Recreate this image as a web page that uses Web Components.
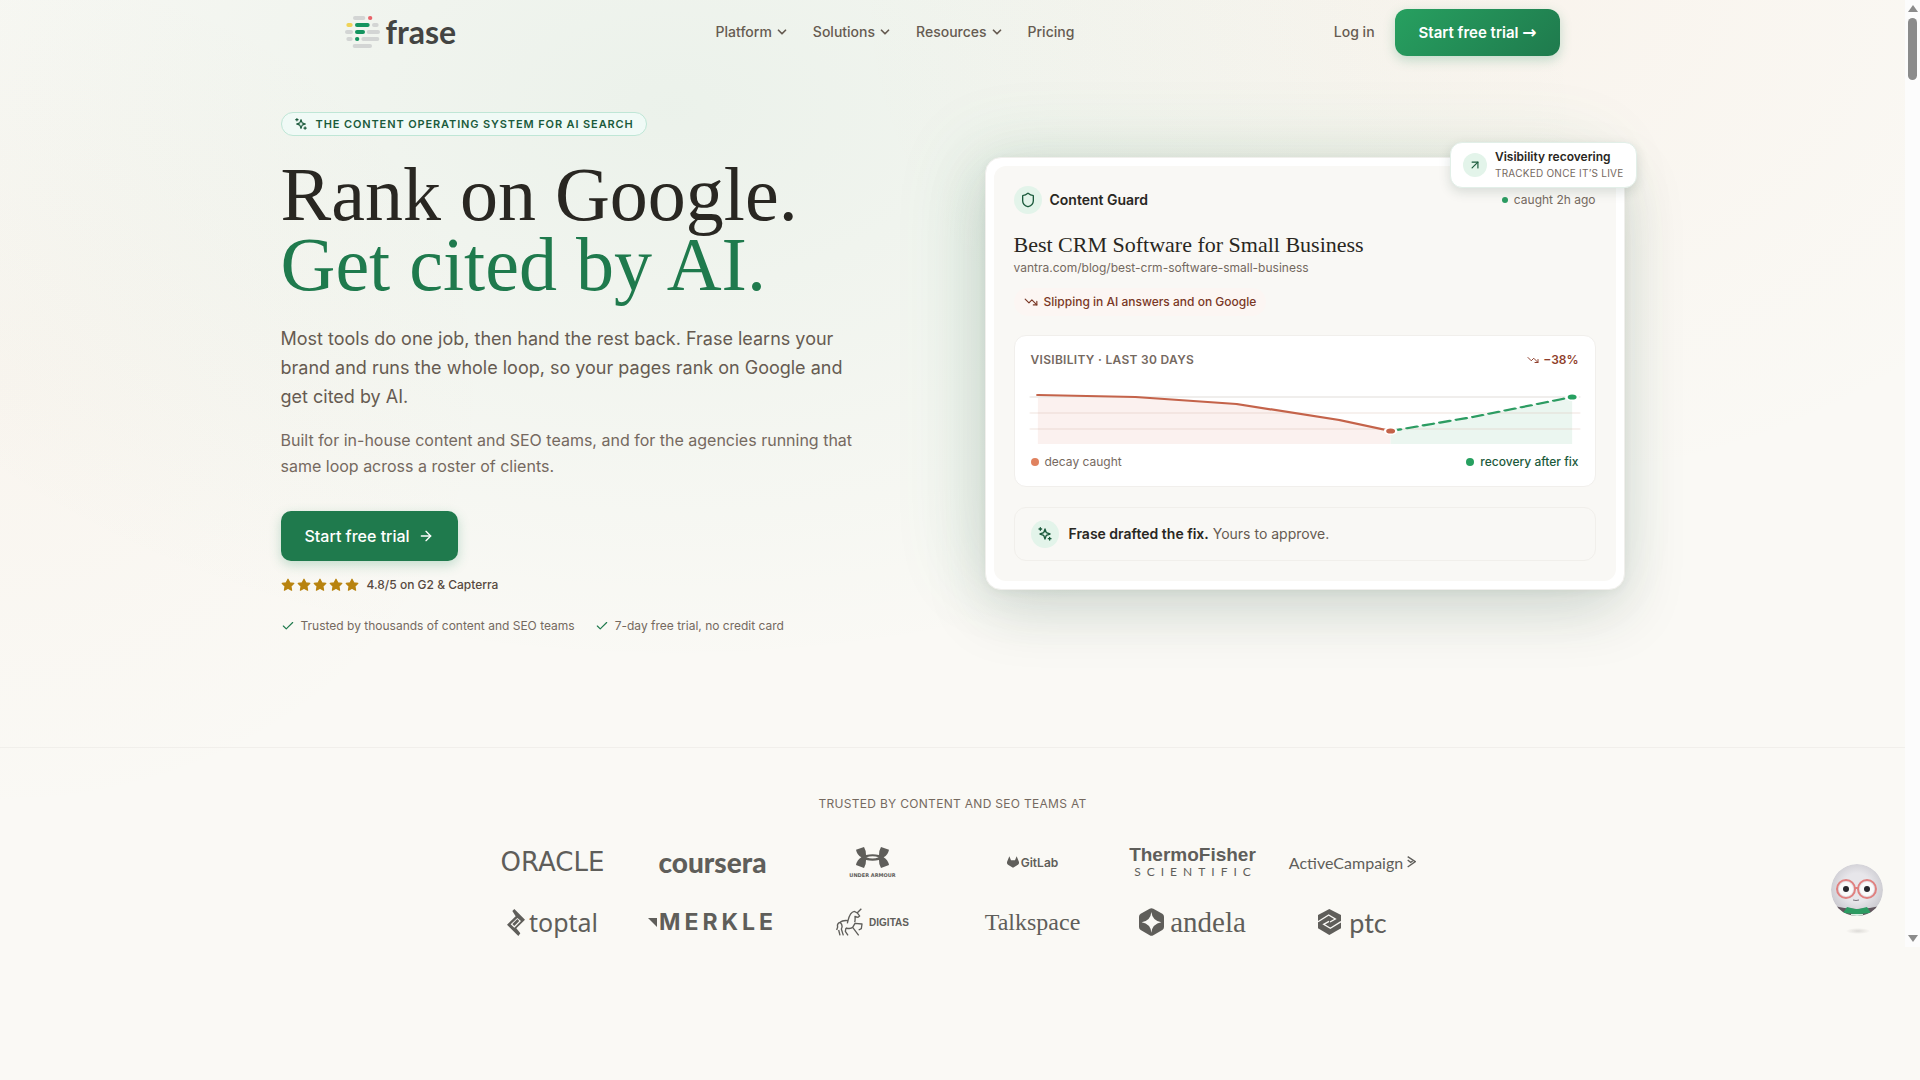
<!DOCTYPE html>
<html lang="en">
<head>
<meta charset="utf-8">
<meta name="viewport" content="width=device-width, initial-scale=1">
<title>Frase</title>
<style>
  :root {
    --sans: Inter, "Liberation Sans", sans-serif;
    --serif: "Liberation Serif", serif;
    --ink: #292722;
    --body: #665b51;
    --muted: #75695f;
    --green: #1f7a4d;
    --green-dark: #1b5a3c;
    --green-soft: #e3f4ea;
    --paper: #faf9f5;
  }
  body {
    margin: 0;
    padding-right: 15px;
    min-height: 100vh;
    box-sizing: border-box;
    font-family: var(--sans);
    color: var(--ink);
    background:
      radial-gradient(ellipse 48% 52% at 35% 10%, rgb(31 140 90 / 0.065), transparent),
      radial-gradient(ellipse 34% 46% at 78% 0%, rgb(230 150 90 / 0.05), transparent),
      radial-gradient(ellipse 26% 40% at 0% 36%, rgb(230 150 90 / 0.04), transparent),
      var(--paper);
  }
</style>
</head>
<body>
  <frase-header></frase-header>
  <main>
    <frase-hero>
      <frase-pill slot="eyebrow">The content operating system for AI search</frase-pill>
      <span slot="title">Rank on Google.</span>
      <span slot="accent">Get cited by AI.</span>
      <span slot="lead">Most tools do one job, then hand the rest back. Frase learns your brand and runs the whole loop, so your pages rank on Google and get cited by AI.</span>
      <span slot="note">Built for in-house content and SEO teams, and for the agencies running that same loop across a roster of clients.</span>
      <guard-card slot="visual"></guard-card>
    </frase-hero>
    <logo-wall><span slot="label">Trusted by content and SEO teams at</span></logo-wall>
  </main>
  <frase-mascot></frase-mascot>
  <page-scrollbar></page-scrollbar>

<script>
const define = (name, html) => {
  const template = document.createElement('template');
  template.innerHTML = html;
  customElements.define(name, class extends HTMLElement {
    constructor() {
      super();
      this.attachShadow({ mode: 'open' });
      this.shadowRoot.append(template.content.cloneNode(true));
    }
  });
};

const icons = {
  chevron: '<path d="m6 9 6 6 6-6" stroke-width="3"/>',
  arrow: '<path d="M5 12h14"/><path d="m12 5 7 7-7 7"/>',
  'arrow-up': '<path d="M7 7h10v10"/><path d="M7 17 17 7"/>',
  check: '<path d="M20 6 9 17l-5-5"/>',
  shield: '<path d="M20 13c0 5-3.500 7.500-7.660 8.950a1 1 0 0 1-.670-.010C7.500 20.500 4 18 4 13V6a1 1 0 0 1 1-1c2 0 4.500-1.200 6.240-2.720a1.170 1.170 0 0 1 1.520 0C14.510 3.810 17 5 19 5a1 1 0 0 1 1 1z"/>',
  down: '<path d="M16 17h6v-6"/><path d="m22 17-8.500-8.500-5 5L2 7"/>',
  sparkles: '<path d="M12 4.500 14 10l5.500 2L14 14l-2 5.500L10 14l-5.500-2L10 10z"/><path d="M5 2.500v4M3 4.500h4M19 17v4M17 19h4"/>',
  star: '<path fill="currentColor" d="m12 2 3.100 6.300 6.900 1-5 4.900 1.200 6.800-6.200-3.300L5.800 21 7 14.200l-5-4.900 6.900-1z"/>'
};

class FraseIcon extends HTMLElement {
  constructor() {
    super();
    this.attachShadow({ mode: 'open' });
  }

  connectedCallback() {
    this.shadowRoot.innerHTML = `
      <style>
        :host { display: inline-flex; flex: none; width: 16px; height: 16px; }
        svg { width: 100%; height: 100%; }
      </style>
      <svg viewBox="0 0 24 24" fill="none" stroke="currentColor" stroke-width="2" stroke-linecap="round" stroke-linejoin="round" aria-hidden="true">${icons[this.getAttribute('name')]}</svg>
    `;
  }
}

customElements.define('frase-icon', FraseIcon);

define('frase-header', `
  <style>
    :host { display: block; }
    header {
      display: flex;
      align-items: center;
      justify-content: space-between;
      max-width: 1216px;
      height: 64px;
      margin: 0 auto;
    }
    a { color: inherit; text-decoration: none; }
    .brand { display: flex; align-items: center; gap: 6px; font: 700 32px/40px Lato, sans-serif; color: #434442; }
    nav, .account { display: flex; align-items: center; font-size: 14px; line-height: 20px; font-weight: 500; color: var(--body); }
    nav { gap: 24px; }
    nav button { display: flex; align-items: center; gap: 3px; padding: 0; border: 0; background: none; font: inherit; color: inherit; cursor: pointer; }
    nav frase-icon { width: 14px; height: 14px; }
    .account { gap: 20px; }
    .cta {
      padding: 13px 24px;
      border-radius: 12px;
      font-size: 15px;
      font-weight: 600;
      color: #fff;
      background: linear-gradient(135deg, #27a060, #1f7a4d);
      box-shadow: 0 4px 12px rgb(31 140 90 / 0.25);
    }
    .cta span { font: 700 17px/20px "DejaVu Sans", sans-serif; }
  </style>
  <header>
    <a class="brand" href="#">
      <svg width="35" height="32" viewBox="15 33 105 96" aria-hidden="true">
        <g fill="#d3d5d4">
          <rect x="39" y="33" width="37" height="12" rx="6"/>
          <rect x="96" y="54" width="20" height="12" rx="6"/>
          <rect x="15" y="75" width="24" height="12" rx="6"/>
          <rect x="80" y="75" width="40" height="12" rx="6"/>
          <rect x="19" y="96" width="19" height="12" rx="6"/>
          <rect x="64" y="96" width="54" height="12" rx="6"/>
          <rect x="38" y="117" width="58" height="12" rx="6"/>
        </g>
        <g fill="#14945f">
          <rect x="45" y="54" width="44" height="12" rx="6"/>
          <rect x="45" y="75" width="30" height="12" rx="6"/>
          <rect x="45" y="96" width="13" height="12" rx="6"/>
        </g>
        <rect x="84" y="33" width="13" height="12" rx="6" fill="#e8636a"/>
        <rect x="19" y="54" width="19" height="12" rx="6" fill="#efd358"/>
      </svg>
      <span>frase</span>
    </a>
    <nav>
      <button>Platform <frase-icon name="chevron"></frase-icon></button>
      <button>Solutions <frase-icon name="chevron"></frase-icon></button>
      <button>Resources <frase-icon name="chevron"></frase-icon></button>
      <a href="#">Pricing</a>
    </nav>
    <div class="account">
      <a href="#">Log in</a>
      <a class="cta" href="#">Start free trial <span>→</span></a>
    </div>
  </header>
`);

define('frase-pill', `
  <style>
    :host {
      display: inline-flex;
      align-items: center;
      gap: 8px;
      padding: 3px 12px;
      border: 1px solid #bfe6d6;
      border-radius: 999px;
      background: #f0faf6;
      font-size: 11px;
      line-height: 16px;
      font-weight: 600;
      letter-spacing: 0.08em;
      text-transform: uppercase;
      color: var(--green-dark);
    }
    frase-icon { width: 14px; height: 14px; }
  </style>
  <frase-icon name="sparkles"></frase-icon>
  <slot></slot>
`);

define('frase-hero', `
  <style>
    :host { display: block; padding: 48px 0 112px; border-bottom: 1px solid #f1efeb; }
    .grid {
      display: grid;
      grid-template-columns: 1fr 1fr;
      align-items: center;
      gap: 64px;
      max-width: 1344px;
      margin: 0 auto;
    }
    .copy { display: flex; flex-direction: column; align-items: flex-start; }
    h1 { margin: 23px 0 25px; font: 400 76px/70px var(--serif); }
    h1 slot { display: block; }
    .accent { color: var(--green); }
    p { margin: 0; max-width: 576px; }
    .lead { margin-bottom: 16px; font-size: 18px; line-height: 29px; color: var(--body); }
    .note { font-size: 16px; line-height: 26px; color: var(--muted); }
    .cta {
      display: flex;
      align-items: center;
      gap: 8px;
      margin: 32px 0 16px;
      padding: 13px 24px;
      border-radius: 10px;
      font-size: 16px;
      line-height: 24px;
      font-weight: 500;
      text-decoration: none;
      color: #fff;
      background: var(--green);
      box-shadow: 0 4px 12px rgb(31 140 90 / 0.25);
    }
    .rating { display: flex; align-items: center; gap: 8px; font-size: 12px; line-height: 16px; font-weight: 500; color: #57493f; }
    .stars { display: flex; gap: 2px; color: #b8830f; }
    .stars frase-icon { width: 14px; height: 14px; }
    ul { display: flex; gap: 20px; margin: 24px 0 0; padding: 0; list-style: none; font-size: 12px; line-height: 18px; color: var(--muted); }
    li { display: flex; align-items: center; gap: 6px; }
    li frase-icon { width: 14px; height: 14px; color: var(--green); }
  </style>
  <section class="grid">
    <div class="copy">
      <slot name="eyebrow"></slot>
      <h1><slot name="title"></slot><slot class="accent" name="accent"></slot></h1>
      <p class="lead"><slot name="lead"></slot></p>
      <p class="note"><slot name="note"></slot></p>
      <a class="cta" href="#">Start free trial <frase-icon name="arrow"></frase-icon></a>
      <div class="rating">
        <span class="stars" role="img" aria-label="5 stars">
          <frase-icon name="star"></frase-icon><frase-icon name="star"></frase-icon><frase-icon name="star"></frase-icon><frase-icon name="star"></frase-icon><frase-icon name="star"></frase-icon>
        </span>
        <span>4.8/5 on G2 &amp; Capterra</span>
      </div>
      <ul>
        <li><frase-icon name="check"></frase-icon>Trusted by thousands of content and SEO teams</li>
        <li><frase-icon name="check"></frase-icon>7-day free trial, no credit card</li>
      </ul>
    </div>
    <slot name="visual"></slot>
  </section>
`);

define('visibility-chart', `
  <style>
    :host {
      display: block;
      padding: 16px;
      border: 1px solid #f1efec;
      border-radius: 12px;
      background: #fff;
      font-size: 12px;
      line-height: 16px;
      color: var(--muted);
    }
    .row { display: flex; justify-content: space-between; }
    .title { font-weight: 600; letter-spacing: 0.025em; text-transform: uppercase; }
    .delta { display: flex; align-items: center; gap: 4px; font-weight: 600; color: #8f3f2c; }
    .delta frase-icon { width: 12px; height: 12px; }
    svg { display: block; width: 100%; height: 64px; margin: 12px 0 10px; overflow: visible; }
    .key { display: flex; align-items: center; gap: 6px; }
    .key::before { content: ""; width: 8px; height: 8px; border-radius: 50%; background: #e0825f; }
    .recovery { font-weight: 500; color: var(--green-dark); }
    .recovery::before { background: #27a060; }
  </style>
  <div class="row">
    <span class="title">Visibility · Last 30 days</span>
    <span class="delta"><frase-icon name="down"></frase-icon>−38%</span>
  </div>
  <svg viewBox="0 0 320 64" preserveAspectRatio="none" fill="none" stroke-linecap="round" stroke-linejoin="round" role="img" aria-label="Visibility falls, then recovers after the fix">
    <path d="M4 15 61 17 120 24 180 40 210 51V64H4z" fill="#fbf1ef"/>
    <path d="M210 51 258 37 316 17V64H210z" fill="#ebf6f0"/>
    <path d="M0 17H320" stroke="#f0eeec" stroke-width="2"/>
    <path d="M0 33H320M0 49H320" stroke="#d9b7a8" stroke-opacity="0.2" stroke-width="2"/>
    <path d="M4 15 61 17 120 24 180 40 210 51" stroke="#c4634a" stroke-width="2.200"/>
    <path d="M210 51 258 37 316 17" stroke="#2c9c62" stroke-width="2.200" stroke-dasharray="6 4"/>
    <circle cx="210" cy="51" r="4" fill="#fff"/>
    <circle cx="210" cy="51" r="2.600" fill="#c4634a"/>
    <circle cx="316" cy="17" r="4" fill="#fff"/>
    <circle cx="316" cy="17" r="2.600" fill="#27a060"/>
  </svg>
  <div class="row">
    <span class="key">decay caught</span>
    <span class="key recovery">recovery after fix</span>
  </div>
`);

define('guard-card', `
  <style>
    :host {
      display: block;
      position: relative;
      padding: 8px;
      border: 1px solid #f0efec;
      border-radius: 16px;
      background: #fff;
      box-shadow:
        0 20px 60px rgb(30 60 45 / 0.17),
        0 2px 8px rgb(30 60 45 / 0.06),
        -20px -10px 80px rgb(39 160 96 / 0.09);
    }
    .inner { padding: 20px; border-radius: 12px; background: #f9f8f5; }
    .head, .brand, .fix, .live, .chip, .toast { display: flex; align-items: center; }
    .head { justify-content: space-between; margin-bottom: 16px; }
    .brand { gap: 8px; font-size: 14px; line-height: 20px; font-weight: 600; }
    .badge {
      display: flex;
      align-items: center;
      justify-content: center;
      flex: none;
      width: 28px;
      height: 28px;
      border-radius: 50%;
      color: var(--green-dark);
      background: var(--green-soft);
    }
    .live { gap: 6px; font-size: 12px; line-height: 16px; color: var(--muted); }
    .live::before { content: ""; width: 6px; height: 6px; border-radius: 50%; background: #2c9c62; }
    h2 { margin: 0; font: 400 22px/30px var(--serif); }
    .url { margin: 0 0 12px; font-size: 12px; line-height: 16px; color: var(--muted); }
    .chip {
      display: inline-flex;
      gap: 6px;
      padding: 6px 10px;
      border-radius: 999px;
      font-size: 12px;
      line-height: 16px;
      font-weight: 500;
      color: #7a3826;
      background: #fcf6f3;
    }
    .chip frase-icon { width: 14px; height: 14px; }
    visibility-chart { margin: 19px 0 20px; }
    .fix { gap: 10px; padding: 12px 16px; border: 1px solid #f1efeb; border-radius: 12px; font-size: 14px; line-height: 20px; color: var(--body); }
    .fix b { font-weight: 600; color: var(--ink); }
    .toast {
      position: absolute;
      top: -16px;
      right: -13px;
      gap: 8px;
      padding: 6px 12px;
      border: 1px solid #e2efe8;
      border-radius: 12px;
      background: #fff;
      box-shadow: 0 4px 12px rgb(30 60 45 / 0.15);
      font-size: 12px;
      line-height: 16px;
      font-weight: 600;
    }
    .toast .badge { width: 24px; height: 24px; }
    .toast frase-icon { width: 14px; height: 14px; }
    .toast small { display: block; font-size: 10px; font-weight: 400; letter-spacing: 0.025em; text-transform: uppercase; color: var(--muted); }
  </style>
  <article class="inner">
    <div class="head">
      <div class="brand"><span class="badge"><frase-icon name="shield"></frase-icon></span>Content Guard</div>
      <span class="live">caught 2h ago</span>
    </div>
    <h2>Best CRM Software for Small Business</h2>
    <p class="url">vantra.com/blog/best-crm-software-small-business</p>
    <div class="chip"><frase-icon name="down"></frase-icon>Slipping in AI answers and on Google</div>
    <visibility-chart></visibility-chart>
    <div class="fix">
      <span class="badge"><frase-icon name="sparkles"></frase-icon></span>
      <span><b>Frase drafted the fix.</b> Yours to approve.</span>
    </div>
  </article>
  <div class="toast">
    <span class="badge"><frase-icon name="arrow-up"></frase-icon></span>
    <div>Visibility recovering<small>Tracked once it’s live</small></div>
  </div>
`);

define('logo-wall', `
  <style>
    :host { display: block; padding: 48px 0; }
    p { margin: 0 0 32px; text-align: center; font-size: 12px; line-height: 16px; letter-spacing: 0.025em; text-transform: uppercase; color: var(--muted); }
    ul {
      display: grid;
      grid-template-columns: repeat(6, 1fr);
      grid-auto-rows: 36px;
      row-gap: 24px;
      max-width: 960px;
      margin: 0 auto;
      padding: 0;
      list-style: none;
      white-space: nowrap;
      color: #5f5e5a;
    }
    li { display: flex; align-items: center; justify-content: center; gap: 6px; }
    svg { flex: none; fill: currentColor; }
    .stack { flex-direction: column; gap: 4px; }
    .oracle { font: 26px "DejaVu Sans", sans-serif; }
    .coursera { font: 900 28px Lato, sans-serif; }
    .armour { font: 700 5px "DejaVu Sans", sans-serif; }
    .gitlab { gap: 2px; font: 600 12px Inter, sans-serif; }
    .thermo { gap: 2px; font: 700 19px/18px "Liberation Sans", sans-serif; }
    .thermo small { font: 400 12px/12px Lato, sans-serif; letter-spacing: 6px; padding-left: 6px; }
    .campaign { gap: 4px; font: 400 16px Lato, sans-serif; }
    .toptal { gap: 4px; font: 400 25px "Noto Sans", sans-serif; }
    .merkle { gap: 2px; font: 700 23px Inter, sans-serif; letter-spacing: 4px; }
    .digitas { font: 700 10px "Liberation Sans", sans-serif; }
    .talkspace { font: 400 24px "Liberation Serif", serif; }
    .andela { font: 400 29px "Liberation Serif", serif; }
    .ptc { gap: 8px; font: 400 27px Lato, sans-serif; }
  </style>
  <p><slot name="label"></slot></p>
  <ul>
    <li class="oracle">ORACLE</li>
    <li class="coursera">coursera</li>
    <li class="stack armour">
      <svg width="35" height="21" viewBox="0 0 105 63" aria-hidden="true">
        <path fill-rule="evenodd" d="M3 8 27 0Q34 12 33 24Q53 19 72 24Q71 12 78 0L102 8Q99 24 86 31Q99 39 102 54L78 63Q71 51 72 39Q53 44 33 39Q34 51 27 63L3 54Q6 39 19 31Q6 24 3 8zM34 31Q53 38 71 31Q53 25 34 31z"/>
      </svg>
      <span>UNDER ARMOUR</span>
    </li>
    <li class="gitlab">
      <svg width="12" height="12" viewBox="0 0 36 34" aria-hidden="true"><path d="M7 0l5 12h12l5-12 7 17q1 5-3 8L18 34 3 25q-4-3-3-8z"/></svg>
      <span>GitLab</span>
    </li>
    <li class="stack thermo"><span>ThermoFisher</span><small>SCIENTIFIC</small></li>
    <li class="campaign">
      <span>ActiveCampaign</span>
      <svg width="9" height="12" viewBox="0 0 27 36" aria-hidden="true"><path d="M2 2 25 17 2 33M2 12l9 7 6-4" fill="none" stroke="currentColor" stroke-width="4"/></svg>
    </li>
    <li class="toptal">
      <svg width="18" height="27" viewBox="0 0 54 81" aria-hidden="true"><path d="M16 6 22 0 54 32 28 58 40 73 34 81 0 47 26 22zM31 27 11 46 22 56 42 36z" fill-rule="evenodd"/><path d="M19 48 34 33" stroke="currentColor" stroke-width="8"/></svg>
      <span>toptal</span>
    </li>
    <li class="merkle">
      <svg width="9" height="9" viewBox="0 0 9 9" aria-hidden="true"><path d="M0 0h9v9z"/></svg>
      <span>MERKLE</span>
    </li>
    <li class="digitas">
      <svg width="27" height="28" viewBox="0 0 81 84" aria-hidden="true"><path d="M76 2 64 14M55 10q10 3 16 14l-5 4-9-3q1 13-1 18M55 10Q42 12 36 38M36 38Q20 36 12 43Q2 46 5 57L2 66M12 43Q22 52 16 63L22 82M8 66l4 16M36 38 34 46M30 60Q44 64 50 58L68 82M30 60 28 70 36 82M50 58 57 46 78 48 76 62 68 66" fill="none" stroke="currentColor" stroke-width="4" stroke-linejoin="round"/></svg>
      <span>DIGITAS</span>
    </li>
    <li class="talkspace">Talkspace</li>
    <li class="andela">
      <svg width="25" height="28" viewBox="0 0 75 84" aria-hidden="true"><path fill-rule="evenodd" d="M32 2q5-3 11 0l27 15q5 3 5 9v31q0 6-5 9L43 82q-6 3-11 0L5 66q-5-3-5-9V26q0-6 5-9zM37 12Q35 38 8 43Q35 48 37 74Q40 48 67 43Q40 38 37 12z"/></svg>
      <span>andela</span>
    </li>
    <li class="ptc">
      <svg width="23" height="26" viewBox="0 0 69 78" aria-hidden="true"><path d="M34 0 69 18V58L34 78 0 58V18z"/><path d="M0 38 32 18 52 30 36 39M69 38 37 58 17 46 33 37" fill="none" stroke="#faf9f5" stroke-width="4"/></svg>
      <span>ptc</span>
    </li>
  </ul>
`);

define('frase-mascot', `
  <style>
    :host { position: fixed; right: 36px; bottom: 144px; }
    button { display: block; padding: 0; border: 0; background: none; cursor: pointer; }
    svg { display: block; }
  </style>
  <button aria-label="Open chat">
    <svg width="54" height="72" viewBox="0 0 54 72" aria-hidden="true">
      <defs>
        <radialGradient id="face" cx="0.500" cy="0.450" r="0.550"><stop offset="0.500" stop-color="#e7e6ea"/><stop offset="1" stop-color="#c9c8ce"/></radialGradient>
        <radialGradient id="shade"><stop stop-color="#dcdad6"/><stop offset="1" stop-color="#dcdad6" stop-opacity="0"/></radialGradient>
        <clipPath id="head"><circle cx="27" cy="26" r="26"/></clipPath>
      </defs>
      <ellipse cx="28" cy="67" rx="12" ry="3" fill="url(#shade)"/>
      <g clip-path="url(#head)">
        <circle cx="27" cy="26" r="26" fill="url(#face)"/>
        <path d="M4 42Q27 48 50 42V54H4z" fill="#62565e"/>
        <path d="M17 43l8 2 4 0 8-2 4 6-12 1-4 0-12-1z" fill="#2c9c62"/>
        <path d="M21 50h12v4H21z" fill="#d8efe2"/>
      </g>
      <circle cx="16" cy="25" r="7" fill="#fafafa"/>
      <circle cx="37" cy="25" r="7" fill="#fafafa"/>
      <g fill="none" stroke="#e0807f" stroke-width="2"><circle cx="16" cy="25" r="9"/><circle cx="37" cy="25" r="9"/><path d="M25 24h3"/></g>
      <circle cx="16" cy="25" r="3" fill="#26262c"/>
      <circle cx="37" cy="25" r="3" fill="#26262c"/>
      <path d="M23 36q3 1 6 0" fill="none" stroke="#77727a"/>
    </svg>
  </button>
`);

define('page-scrollbar', `
  <style>
    :host {
      display: flex;
      flex-direction: column;
      position: fixed;
      top: 0;
      right: 0;
      bottom: 133px;
      align-items: center;
      width: 15px;
      box-sizing: border-box;
      padding: 5px 0;
      background: #fcfcfc;
    }
    svg { fill: #8b8b8b; }
    .thumb { width: 9px; height: 62px; margin: 6px 0 auto; border-radius: 5px; background: #8b8b8b; }
  </style>
  <svg width="10" height="7" viewBox="0 0 10 7" aria-hidden="true"><path d="M0 7 5 0l5 7z"/></svg>
  <span class="thumb"></span>
  <svg width="10" height="7" viewBox="0 0 10 7" aria-hidden="true"><path d="M0 0h10L5 7z"/></svg>
`);
</script>
</body>
</html>
